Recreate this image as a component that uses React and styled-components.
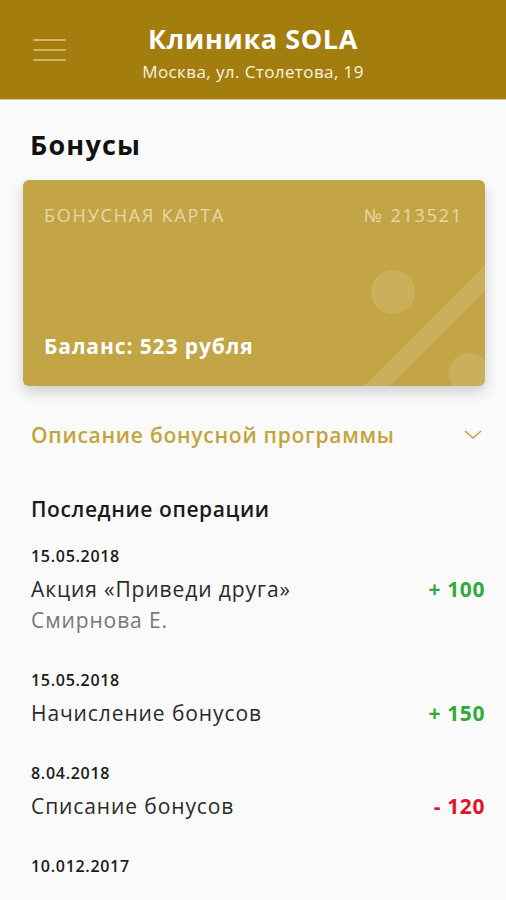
import styled, { createGlobalStyle } from "styled-components";

const GlobalStyle = createGlobalStyle`
  body {
    margin: 0;
    background: #fafafa;
    font-family: "Open Sans", "Liberation Sans", sans-serif;
  }
`;

const operations = [
  { date: "15.05.2018", title: "Акция «Приведи друга»", sub: "Смирнова Е.", amount: "+ 100", plus: true },
  { date: "15.05.2018", title: "Начисление бонусов", amount: "+ 150", plus: true },
  { date: "8.04.2018", title: "Списание бонусов", amount: "- 120", plus: false },
  { date: "10.012.2017" },
];

const App = () => {
  return (
    <Page>
      <GlobalStyle />
      <Header>
        <Burger>
          <span />
          <span />
          <span />
        </Burger>
        <HeaderTitle>Клиника SOLA</HeaderTitle>
        <HeaderSub>Москва, ул. Столетова, 19</HeaderSub>
      </Header>
      <Content>
        <PageTitle>Бонусы</PageTitle>
        <Card>
          <Percent viewBox="0 0 140 140">
            <circle cx="48" cy="46" r="22" />
            <line x1="22" y1="150" x2="150" y2="22" />
            <circle cx="124" cy="127" r="20" />
          </Percent>
          <CardTop>
            <span>БОНУСНАЯ КАРТА</span>
            <span>№ 213521</span>
          </CardTop>
          <Balance>Баланс: 523 рубля</Balance>
        </Card>
        <Accordion>
          <span>Описание бонусной программы</span>
          <svg width="18" height="10" viewBox="0 0 18 10">
            <path d="M1 1 L9 8 L17 1" fill="none" stroke="#c3a43c" strokeWidth="1.6" />
          </svg>
        </Accordion>
        <SectionTitle>Последние операции</SectionTitle>
        <List>
          {operations.map((op, i) => (
            <Operation key={i}>
              <OpDate>{op.date}</OpDate>
              {op.title && (
                <OpRow>
                  <div>
                    <OpTitle>{op.title}</OpTitle>
                    {op.sub && <OpSub>{op.sub}</OpSub>}
                  </div>
                  <Amount $plus={op.plus}>{op.amount}</Amount>
                </OpRow>
              )}
            </Operation>
          ))}
        </List>
      </Content>
    </Page>
  );
};

const Page = styled.div`
  width: 506px;
  height: 900px;
  overflow: hidden;
  background: #fafafa;
`;

const Header = styled.header`
  position: relative;
  height: 100px;
  background: #a37d0e;
  color: #fff;
  display: flex;
  flex-direction: column;
  align-items: center;
  padding-top: 22px;
  box-sizing: border-box;
  border-bottom: 1px solid #d8c9a0;
`;

const Burger = styled.div`
  position: absolute;
  left: 33px;
  top: 39px;
  width: 33px;
  display: flex;
  flex-direction: column;
  gap: 8px;
  span {
    height: 2px;
    border-radius: 1px;
    background: rgba(255, 232, 170, 0.55);
  }
`;

const HeaderTitle = styled.div`
  font-size: 27px;
  font-weight: 700;
  line-height: 34px;
  letter-spacing: 0.6px;
`;

const HeaderSub = styled.div`
  font-size: 17px;
  line-height: 22px;
  margin-top: 5px;
  letter-spacing: 0.4px;
  color: #fbf4e2;
`;

const Content = styled.div`
  padding: 0 21px 0 23px;
`;

const PageTitle = styled.h1`
  margin: 0;
  padding: 28px 0 0 7px;
  font-size: 27px;
  line-height: 34px;
  font-weight: 700;
  letter-spacing: 1.2px;
  color: #111;
`;

const Card = styled.div`
  position: relative;
  overflow: hidden;
  margin-top: 18px;
  height: 206px;
  border-radius: 6px;
  background: #c4a545;
  box-shadow: 0 6px 14px rgba(0, 0, 0, 0.18);
  padding: 23px 22px 0 21px;
  box-sizing: border-box;
  display: flex;
  flex-direction: column;
  justify-content: space-between;
`;

const Percent = styled.svg`
  position: absolute;
  right: 0;
  bottom: 0;
  width: 140px;
  height: 140px;
  circle {
    fill: rgba(255, 255, 255, 0.12);
  }
  line {
    stroke: rgba(255, 255, 255, 0.12);
    stroke-width: 18;
  }
`;

const CardTop = styled.div`
  display: flex;
  justify-content: space-between;
  font-size: 18px;
  line-height: 24px;
  letter-spacing: 1.8px;
  color: rgba(255, 255, 255, 0.58);
`;

const Balance = styled.div`
  position: relative;
  font-size: 21px;
  font-weight: 700;
  line-height: 28px;
  letter-spacing: 0.9px;
  color: #fff;
  margin-bottom: 26px;
`;

const Accordion = styled.div`
  display: flex;
  justify-content: space-between;
  align-items: center;
  padding: 35px 3px 0 8px;
  font-size: 21px;
  font-weight: 600;
  line-height: 28px;
  letter-spacing: 0.75px;
  color: #c3a43c;
`;

const SectionTitle = styled.h2`
  margin: 46px 0 0 8px;
  font-size: 21px;
  font-weight: 600;
  line-height: 28px;
  letter-spacing: 0.6px;
  color: #1a1a1a;
`;

const List = styled.div`
  display: flex;
  flex-direction: column;
  gap: 33px;
  margin-top: 22px;
  padding: 0 0 0 8px;
`;

const Operation = styled.div`
  display: flex;
  flex-direction: column;
`;

const OpDate = styled.div`
  font-size: 16px;
  line-height: 22px;
  font-weight: 600;
  letter-spacing: 0.7px;
  color: #1a1a1a;
`;

const OpRow = styled.div`
  display: flex;
  justify-content: space-between;
  align-items: flex-start;
  margin-top: 7px;
`;

const OpTitle = styled.div`
  font-size: 21px;
  line-height: 31px;
  letter-spacing: 0.9px;
  color: #2a2a2a;
`;

const OpSub = styled.div`
  font-size: 21px;
  line-height: 31px;
  letter-spacing: 0.9px;
  color: #777;
`;

const Amount = styled.div`
  font-size: 21px;
  line-height: 31px;
  font-weight: 700;
  letter-spacing: 0.6px;
  color: ${(p) => (p.$plus ? "#33a93a" : "#e0142c")};
`;

export default App;
